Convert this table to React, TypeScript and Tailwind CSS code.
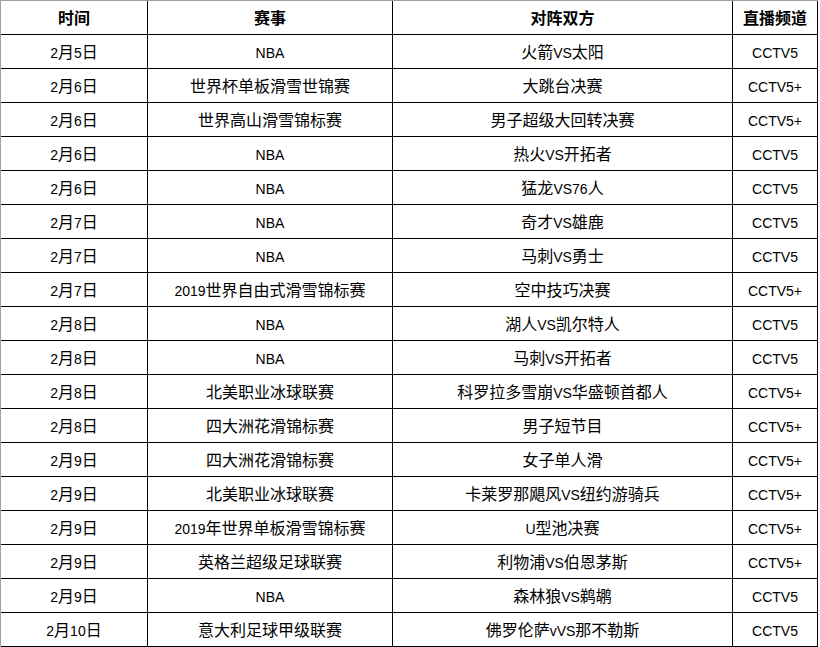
import React from 'react';

type Row = [string, string, string, string];

const rows: Row[] = [
  ['2月5日', 'NBA', '火箭VS太阳', 'CCTV5'],
  ['2月6日', '世界杯单板滑雪世锦赛', '大跳台决赛', 'CCTV5+'],
  ['2月6日', '世界高山滑雪锦标赛', '男子超级大回转决赛', 'CCTV5+'],
  ['2月6日', 'NBA', '热火VS开拓者', 'CCTV5'],
  ['2月6日', 'NBA', '猛龙VS76人', 'CCTV5'],
  ['2月7日', 'NBA', '奇才VS雄鹿', 'CCTV5'],
  ['2月7日', 'NBA', '马刺VS勇士', 'CCTV5'],
  ['2月7日', '2019世界自由式滑雪锦标赛', '空中技巧决赛', 'CCTV5+'],
  ['2月8日', 'NBA', '湖人VS凯尔特人', 'CCTV5'],
  ['2月8日', 'NBA', '马刺VS开拓者', 'CCTV5'],
  ['2月8日', '北美职业冰球联赛', '科罗拉多雪崩VS华盛顿首都人', 'CCTV5+'],
  ['2月8日', '四大洲花滑锦标赛', '男子短节目', 'CCTV5+'],
  ['2月9日', '四大洲花滑锦标赛', '女子单人滑', 'CCTV5+'],
  ['2月9日', '北美职业冰球联赛', '卡莱罗那飓风VS纽约游骑兵', 'CCTV5+'],
  ['2月9日', '2019年世界单板滑雪锦标赛', 'U型池决赛', 'CCTV5+'],
  ['2月9日', '英格兰超级足球联赛', '利物浦VS伯恩茅斯', 'CCTV5+'],
  ['2月9日', 'NBA', '森林狼VS鹈鹕', 'CCTV5'],
  ['2月10日', '意大利足球甲级联赛', '佛罗伦萨vVS那不勒斯', 'CCTV5'],
];

const header: Row = ['时间', '赛事', '对阵双方', '直播频道'];

// CJK glyphs render a touch larger than the latin ones in the source sheet
const Mixed: React.FC<{ text: string }> = ({ text }) => {
  const parts = text.match(/[\u4e00-\u9fff]+|[^\u4e00-\u9fff]+/g) ?? [];
  return (
    <>
      {parts.map((p, i) =>
        /[\u4e00-\u9fff]/.test(p) ? (
          <span key={i} className="text-[16px]">
            {p}
          </span>
        ) : (
          <span key={i}>{p}</span>
        )
      )}
    </>
  );
};

const Cell: React.FC<{ text: string; bold?: boolean }> = ({ text, bold }) => (
  <div
    className={`flex h-[34px] items-center justify-center border-r border-b border-black pt-[2px] text-[14px] leading-none text-black ${
      bold ? 'font-bold' : ''
    }`}
  >
    <span className="whitespace-nowrap">
      <Mixed text={text} />
    </span>
  </div>
);

export default function App() {
  return (
    <div className="min-h-[647px] bg-white">
      <div
        className="grid w-[818px] grid-cols-[147px_245px_340px_85px] border-t border-l border-[#a0a0a0]"
        style={{ fontFamily: '"Liberation Sans", "Noto Sans CJK SC", sans-serif' }}
      >
        {header.map((h) => (
          <Cell key={h} text={h} bold />
        ))}
        {rows.map((r, i) => (
          <React.Fragment key={i}>
            {r.map((c, j) => (
              <Cell key={j} text={c} />
            ))}
          </React.Fragment>
        ))}
      </div>
    </div>
  );
}
